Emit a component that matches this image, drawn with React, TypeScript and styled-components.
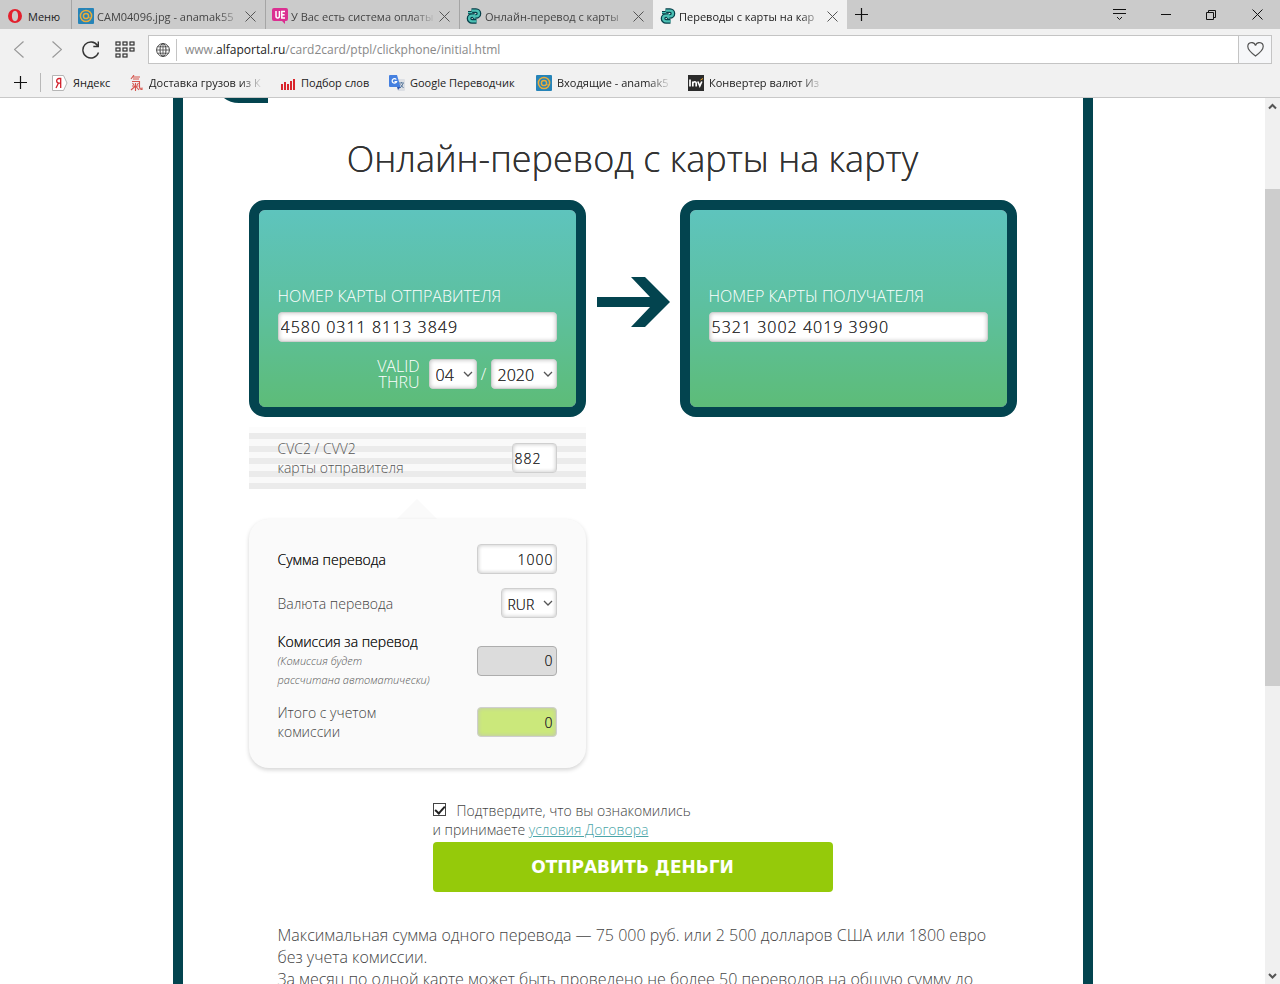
import React from 'react';
import styled, { createGlobalStyle } from 'styled-components';

const teal = '#03444f';

const GlobalStyle = createGlobalStyle`
  * { box-sizing: border-box; }
  body { margin: 0; background: #fff; font-family: "Open Sans", "Noto Sans", sans-serif; }
  button, input, select { font: inherit; color: inherit; margin: 0; }
  svg { display: block; flex: none; }
`;

/* ---------- browser window ---------- */

const Window = styled.div`
  display: flex;
  flex-direction: column;
  height: 100vh;
  overflow: hidden;
`;

const TabBar = styled.div`
  display: flex;
  height: 29px;
  background: #cbcbcb;
  font-size: 11px;
  color: #444;
`;

const PlainButton = styled.button<{ $w?: number }>`
  display: flex;
  align-items: center;
  justify-content: center;
  flex: none;
  width: ${p => (p.$w ? p.$w + 'px' : 'auto')};
  padding: 0;
  border: 0;
  background: none;
`;

const MenuButton = styled(PlainButton)`
  justify-content: flex-start;
  gap: 6px;
  width: 71px;
  padding: 3px 0 0 8px;
  color: #222;
`;

const Tab = styled.div<{ $active?: boolean }>`
  display: flex;
  align-items: center;
  gap: 3px;
  width: 194px;
  min-width: 0;
  padding: 3px 9px 0 6px;
  border-left: 1px solid ${p => (p.$active ? '#f1f1f1' : '#a5a5a5')};
  background: ${p => (p.$active ? '#f1f1f1' : 'transparent')};
  color: ${p => (p.$active ? '#222' : '#444')};
`;

const Fade = styled.span<{ $w?: number }>`
  flex: ${p => (p.$w ? 'none' : '1')};
  width: ${p => (p.$w ? p.$w + 'px' : 'auto')};
  min-width: 0;
  overflow: hidden;
  white-space: nowrap;
  mask-image: linear-gradient(to right, #000 calc(100% - 24px), transparent);
`;

const WindowButtons = styled.div`
  display: flex;
  margin-left: auto;
`;

const Toolbar = styled.div`
  display: flex;
  align-items: center;
  height: 41px;
  padding: 0 8px 0 0;
  background: #f1f1f1;
`;

const AddressBar = styled.div`
  display: flex;
  align-items: center;
  flex: 1;
  height: 29px;
  margin-left: 4px;
  border: 1px solid #c4c4c4;
  background: #fff;
`;

const Url = styled.a`
  flex: 1;
  padding-left: 8px;
  border-left: 1px solid #c4c4c4;
  font-size: 12px;
  line-height: 22px;
  color: #888;
  text-decoration: none;
`;

const Host = styled.span`
  color: #222;
`;

const HeartButton = styled(PlainButton)`
  align-self: stretch;
  border-left: 1px solid #c4c4c4;
  background: #f6f7f9;
`;

const Bookmarks = styled.nav`
  display: flex;
  align-items: center;
  height: 28px;
  padding-bottom: 2px;
  border-bottom: 1px solid #c8c8c8;
  background: #f1f1f1;
  font-size: 11px;
`;

const BarDivider = styled.span`
  width: 1px;
  height: 19px;
  margin-right: 11px;
  background: #b8b8b8;
`;

const Bookmark = styled.a`
  display: flex;
  align-items: center;
  gap: 5px;
  margin-right: 16px;
  color: #222;
  text-decoration: none;
`;

const BookmarkText = styled.span<{ $w: number }>`
  width: ${p => p.$w}px;
  white-space: nowrap;
`;

const Body = styled.div`
  display: flex;
  flex: 1;
  min-height: 0;
`;

const Scrollbar = styled.div`
  display: flex;
  flex-direction: column;
  width: 15px;
  background: #f0f0f0;
`;

const Space = styled.div<{ $grow: number; $thumb?: boolean }>`
  flex: ${p => p.$grow};
  background: ${p => (p.$thumb ? '#cdcdcd' : 'transparent')};
`;

/* ---------- transfer page ---------- */

const Page = styled.div`
  flex: 1;
  min-width: 0;
  overflow: hidden;
`;

const Frame = styled.main`
  max-width: 920px;
  margin: 0 auto;
  padding: 0 66px;
  border: solid ${teal};
  border-width: 0 10px;
  font-weight: 300;
  color: #444;
`;

const LogoEdge = styled.div`
  height: 5px;
  margin-left: -27px;
`;

const Title = styled.h1`
  margin: 31px 0 17px;
  font-size: 36px;
  line-height: 49px;
  font-weight: 300;
  text-align: center;
  white-space: nowrap;
  text-shadow: 0 0 0 #333;
  color: #333;
`;

const Cards = styled.div`
  display: flex;
  align-items: flex-start;
  justify-content: space-between;
`;

const Arrow = styled.svg`
  margin: 77px 0 0 1px;
`;

const Card = styled.section`
  width: 337px;
  height: 217px;
  padding: 76px 19px 0;
  border: 10px solid ${teal};
  border-radius: 16px;
  background: linear-gradient(#5ec4bd, #5dc0a0 48%, #5dbc78) padding-box;
  font-size: 16px;
  color: #fff;
`;

const CardLabel = styled.label`
  display: block;
  margin-bottom: 5px;
  line-height: 21px;
  white-space: nowrap;
`;

const Field = styled.input<{ $w: string; $tone?: 'grey' | 'green' | 'white'; $size?: number; $right?: boolean }>`
  display: block;
  flex: none;
  width: ${p => p.$w};
  height: 30px;
  padding: 0 2px;
  border: 1px solid ${p => (p.$tone === 'grey' ? '#adadad' : '#cfcfcf')};
  border-radius: 4px;
  outline: 0;
  background: ${p => (p.$tone === 'grey' ? '#dcdcdc' : p.$tone === 'green' ? '#cbe87b' : '#fff')};
  box-shadow: inset 0 0 4px ${p => (p.$tone === 'grey' ? 'transparent' : '#c0c0c0')};
  font-size: ${p => p.$size || 14}px;
  font-weight: 300;
  letter-spacing: 1px;
  text-align: ${p => (p.$right ? 'right' : 'left')};
  text-shadow: 0 0 0 #333;
  color: #333;
`;

const Valid = styled.div`
  display: flex;
  align-items: center;
  justify-content: flex-end;
  margin-top: 16px;
`;

const ValidText = styled.span`
  width: 43px;
  margin-right: 9px;
  line-height: 16px;
  text-align: right;
`;

const Slash = styled.span`
  width: 14px;
  text-align: center;
`;

const SelectWrap = styled.span<{ $w: number }>`
  position: relative;
  flex: none;
  width: ${p => p.$w}px;
  svg { position: absolute; right: 4px; top: 12px; pointer-events: none; }
`;

const SelectBox = styled.select<{ $size?: number }>`
  display: block;
  width: 100%;
  height: 30px;
  padding: 2px 0 0 6px;
  border: 1px solid #cfcfcf;
  border-radius: 4px;
  appearance: none;
  background: #fff;
  box-shadow: inset 0 0 4px #c0c0c0;
  font-size: ${p => p.$size || 14}px;
  font-weight: 300;
  text-shadow: 0 0 0 #333;
  color: #333;
`;

const Narrow = styled.div`
  width: 337px;
`;

const Cvc = styled.div`
  display: flex;
  align-items: center;
  justify-content: space-between;
  margin-top: 10px;
  padding: 12px 29px;
  background: repeating-linear-gradient(#ebebeb 0 6px, #f9f9f9 6px 13px, #ebebeb 13px 19px, #f9f9f9 19px 25px) 0 6px no-repeat #fcfcfc;
  font-size: 14px;
  line-height: 19px;
  color: #555;
`;

const Pointer = styled.div`
  width: 0;
  margin: 10px auto 0;
  border: solid transparent;
  border-width: 0 20px 20px;
  border-bottom-color: #fafafa;
`;

const Panel = styled.section`
  display: flex;
  flex-direction: column;
  gap: 14px;
  padding: 25px 29px 27px;
  border-radius: 20px;
  background: #fafafa;
  box-shadow: 0 2px 4px #d4d4d4;
  font-size: 14px;
  line-height: 19px;
`;

const Row = styled.div`
  display: flex;
  align-items: center;
  justify-content: space-between;
`;

const Strong = styled.span`
  display: block;
  text-shadow: 0 0 0 #222;
  color: #222;
`;

const Note = styled.em`
  display: block;
  font-size: 11px;
  color: #555;
`;

const Submit = styled.form`
  width: 400px;
  margin: 33px auto 0;
  font-size: 14px;
  line-height: 19px;
`;

const Check = styled.input`
  position: relative;
  width: 13px;
  height: 13px;
  margin: 0 11px 0 0;
  border: 1px solid #444;
  appearance: none;
  background: #fff;
  vertical-align: 0;
  &:checked::after {
    content: '';
    position: absolute;
    left: 3px;
    top: 0;
    width: 4px;
    height: 8px;
    border: solid #222;
    border-width: 0 2px 2px 0;
    transform: rotate(42deg);
  }
`;

const Terms = styled.a`
  color: #4aa5a8;
`;

const SendButton = styled.button`
  display: block;
  width: 100%;
  height: 50px;
  margin-top: 3px;
  border: 0;
  border-radius: 4px;
  background: #95ca0a;
  font-family: "DejaVu Sans", sans-serif;
  font-size: 17px;
  font-weight: 700;
  color: #fff;
`;

const Terse = styled.p`
  margin: 32px 0 0;
  padding: 0 29px;
  font-size: 16px;
  line-height: 22px;
  white-space: nowrap;
`;

/* ---------- icons ---------- */

const Cross = ({ color = '#555' }: { color?: string }) => (
  <svg width="11" height="11" viewBox="0 0 11 11" stroke={color} fill="none"><path d="M.5.5l10 10M10.5.5l-10 10" /></svg>
);
const Plus = () => (
  <svg width="13" height="13" viewBox="0 0 13 13" stroke="#111" strokeWidth="1.2"><path d="M6.5 0v13M0 6.5h13" /></svg>
);
const Opera = () => (
  <svg width="14" height="14" viewBox="0 0 14 14"><path fillRule="evenodd" fill="#e3202d" d="M7 0a7 7 0 100 14A7 7 0 007 0zm0 1.800c2 0 3.100 2.300 3.100 5.200S9 12.200 7 12.200 3.900 9.900 3.900 7 5 1.800 7 1.800z" /></svg>
);
const MailRu = () => (
  <svg width="16" height="16" viewBox="0 0 16 16" fill="none">
    <rect width="16" height="16" rx="1" fill="#2684b8" />
    <g stroke="#e9ac3a" strokeWidth="1.5"><circle cx="8" cy="8" r="2.600" /><circle cx="8" cy="8" r="5.600" /></g>
    <path stroke="#e9ac3a" d="M10.600 9q.8 1.800 2.400 1" />
  </svg>
);
const UeIcon = () => (
  <svg width="16" height="16" viewBox="0 0 16 16" fill="none">
    <path fill="#db2f91" d="M2 0h12a2 2 0 012 2v9a2 2 0 01-2 2h-1v3l-3-3H2a2 2 0 01-2-2V2a2 2 0 012-2z" />
    <path stroke="#fff" strokeWidth="1.500" d="M4 3v5q0 2 1.700 2t1.700-2V3M13 3.500H9.800v6.500H13M9.800 6.700h2.800" />
  </svg>
);
const transferLoops = 'M5.500 2.600H10a2.900 2.900 0 010 5.800H7.500M10.500 13.400H6a2.900 2.900 0 010-5.800H8';
const transferHeads = 'M9.300 6.200L7.200 8.400l2.100 2.200M2 4.600h4.200';
const Transfer = () => (
  <svg width="16" height="16" viewBox="0 0 16 16" fill="none" strokeLinejoin="round">
    <path stroke="#06404a" strokeWidth="4.800" d={transferLoops} />
    <path stroke="#06404a" strokeWidth="3.400" d={transferHeads} />
    <path stroke="#4cc0b4" strokeWidth="2.300" d={transferLoops} />
    <path stroke="#4cc0b4" strokeWidth="1.400" d={transferHeads} />
  </svg>
);
const Globe = () => (
  <svg width="14" height="14" viewBox="0 0 14 14" fill="none" stroke="#444"><circle cx="7" cy="7" r="6.400" /><ellipse cx="7" cy="7" rx="3" ry="6.400" /><path d="M7 .5v13M.5 7h13M1.500 3.800h11M1.500 10.200h11" strokeWidth=".8" /></svg>
);
const Speed = () => (
  <svg width="20" height="17" viewBox="0 0 20 17" fill="none" stroke="#333" strokeWidth="1.200">
    {[1, 8, 15].map(x => [1, 7, 13].map(y => (x === 15 && y === 13 ? null : <rect key={`${x}-${y}`} x={x} y={y} width="4" height="3" />)))}
  </svg>
);
const Yandex = () => (
  <svg width="16" height="16" viewBox="0 0 16 16" fill="none"><path fill="#fff" stroke="#b5b5b5" d="M.5.5h11L15 8l-3.500 7.500H.5z" /><path stroke="#d1202b" strokeWidth="1.300" d="M8.700 13V3.500H7a2.300 2.300 0 000 4.700h1.700M6.500 8L4 13" /></svg>
);
const Cargo = () => (
  <svg width="14" height="16" viewBox="0 0 14 16" fill="none" stroke="#d5544c" strokeWidth="1.100"><path d="M4 0L1 4M3 2h7M3 4h6M2 6.500h7.500v5q0 3 2.500 3v-2M2 11h6.500M5.500 8v8M2.500 8l1.500 2M8.500 8L7 10M5 11.500L1 15M6 11.500L9 15" /></svg>
);
const Bars = () => (
  <svg width="16" height="16" viewBox="0 0 16 16" stroke="#d9252c" strokeWidth="2"><path d="M2 9v6M5 7v8M8 9v6M11 6v9" /><path d="M14 4v11" /></svg>
);
const Translate = () => (
  <svg width="16" height="16" viewBox="0 0 16 16" fill="none">
    <path fill="#dcdfe4" d="M6 4h9a1 1 0 011 1v10a1 1 0 01-1 1H9z" />
    <path fill="#4580e0" d="M1 0h7l3.500 12H1a1 1 0 01-1-1V1a1 1 0 011-1z" />
    <path stroke="#fff" strokeWidth="1.200" d="M7.300 4.500a2.300 2.300 0 10.300 2.200H5.500" />
    <path stroke="#5b7a9d" d="M10 8h5M12.500 7v1M14 8.500q-1 3-3 4.500M11.500 9.500l3 3.500" />
    <path fill="#2f57b0" d="M8 12h3.500L9 15z" />
  </svg>
);
const Investing = () => (
  <svg width="16" height="16" viewBox="0 0 16 16" fill="none"><rect width="16" height="16" fill="#2b2b2b" /><path stroke="#fff" strokeWidth="1.700" d="M2 4.500v7M4.800 11.500V6.500M4.800 8q2.700-2.500 3.400 0v3.500M9.800 6.500l2 4.500 2-4.500" /><path stroke="#f0a92c" d="M12.500 5l2.500-1.500" /></svg>
);
const Chevron = () => (
  <svg width="10" height="6" viewBox="0 0 10 6" fill="none" stroke="#555" strokeWidth="1.300"><path d="M1 1l4 4 4-4" /></svg>
);
const ScrollArrow = ({ down }: { down?: boolean }) => (
  <svg width="15" height="17" viewBox="0 0 15 17" fill="none" stroke="#555" strokeWidth="2"><path d={down ? 'M4 7l3.500 3.500L11 7' : 'M4 10.500L7.500 7l3.500 3.500'} /></svg>
);

const tabs = [
  { icon: <MailRu />, text: 'CAM04096.jpg - anamak55' },
  { icon: <UeIcon />, text: 'У Вас есть система оплаты' },
  { icon: <Transfer />, text: 'Онлайн-перевод с карты' },
  { icon: <Transfer />, text: 'Переводы с карты на кар', active: true },
];

const bookmarks = [
  { icon: <Yandex />, text: 'Яндекс', w: 41 },
  { icon: <Cargo />, text: 'Доставка грузов из К', w: 115, fade: true },
  { icon: <Bars />, text: 'Подбор слов', w: 72 },
  { icon: <Translate />, text: 'Google Переводчик', w: 110 },
  { icon: <MailRu />, text: 'Входящие - anamak5', w: 115, fade: true },
  { icon: <Investing />, text: 'Конвертер валют Из', w: 115, fade: true },
];

export default function App() {
  return (
    <Window>
      <GlobalStyle />
      <TabBar>
        <MenuButton><Opera />Меню</MenuButton>
        {tabs.map(t => (
          <Tab key={t.text} $active={t.active}>
            {t.icon}
            <Fade>{t.text}</Fade>
            <PlainButton aria-label="Закрыть вкладку"><Cross /></PlainButton>
          </Tab>
        ))}
        <PlainButton $w={29} aria-label="Новая вкладка"><Plus /></PlainButton>
        <WindowButtons>
          <PlainButton $w={50} aria-label="Вкладки">
            <svg width="13" height="12" viewBox="0 0 13 12" fill="none" stroke="#111"><path d="M0 .5h13M0 4.500h13M4 8l2.500 2.500L9 8" /></svg>
          </PlainButton>
          <PlainButton $w={43} aria-label="Свернуть"><svg width="10" height="2" viewBox="0 0 10 2"><path d="M0 .5h10" stroke="#111" /></svg></PlainButton>
          <PlainButton $w={47} aria-label="Развернуть">
            <svg width="10" height="10" viewBox="0 0 10 10" fill="none" stroke="#111"><path d="M.5 2.500h7v7h-7zM2.500 2.500v-2h7v7h-2" /></svg>
          </PlainButton>
          <PlainButton $w={46} aria-label="Закрыть"><Cross color="#111" /></PlainButton>
        </WindowButtons>
      </TabBar>
      <Toolbar>
        <PlainButton $w={38} aria-label="Назад"><svg width="10" height="17" viewBox="0 0 10 17" fill="none" stroke="#999" strokeWidth="1.200"><path d="M9.500.5l-9 8 9 8" /></svg></PlainButton>
        <PlainButton $w={37} aria-label="Вперёд"><svg width="10" height="17" viewBox="0 0 10 17" fill="none" stroke="#999" strokeWidth="1.200"><path d="M.5.5l9 8-9 8" /></svg></PlainButton>
        <PlainButton $w={31} aria-label="Обновить"><svg width="18" height="18" viewBox="0 0 18 18" fill="none" stroke="#333" strokeWidth="1.400"><path d="M16.500 11.500A8 8 0 1115.500 4.500M16.300.5v5h-5" /></svg></PlainButton>
        <PlainButton $w={38} aria-label="Экспресс-панель"><Speed /></PlainButton>
        <AddressBar>
          <PlainButton $w={27} aria-label="Сведения о сайте"><Globe /></PlainButton>
          <Url href="#">www.<Host>alfaportal.ru</Host>/card2card/ptpl/clickphone/initial.html</Url>
          <HeartButton $w={33} aria-label="В закладки">
            <svg width="17" height="15" viewBox="0 0 17 15" fill="none" stroke="#555" strokeWidth="1.200"><path d="M8.500 14C5 11.500.8 8.500.8 4.600a3.900 3.900 0 017.700-1 3.900 3.900 0 017.700 1c0 3.900-4.200 6.900-7.700 9.400z" /></svg>
          </HeartButton>
        </AddressBar>
      </Toolbar>
      <Bookmarks>
        <PlainButton $w={40} aria-label="Добавить закладку"><Plus /></PlainButton>
        <BarDivider />
        {bookmarks.map(b => (
          <Bookmark key={b.text} href="#">
            {b.icon}
            {b.fade ? <Fade $w={b.w}>{b.text}</Fade> : <BookmarkText $w={b.w}>{b.text}</BookmarkText>}
          </Bookmark>
        ))}
      </Bookmarks>
      <Body>
        <Page>
          <Frame>
            <LogoEdge><svg width="46" height="5" viewBox="0 0 46 5"><path d="M2 0h44v5H17Q8 5 2 0z" fill={teal} /></svg></LogoEdge>
            <Title>Онлайн-перевод с карты на карту</Title>
            <Cards>
              <Card>
                <CardLabel htmlFor="from">НОМЕР КАРТЫ ОТПРАВИТЕЛЯ</CardLabel>
                <Field id="from" $w="100%" $size={16} defaultValue="4580 0311 8113 3849" />
                <Valid>
                  <ValidText>VALID THRU</ValidText>
                  <SelectWrap $w={48}><SelectBox $size={16} aria-label="Месяц"><option>04</option></SelectBox><Chevron /></SelectWrap>
                  <Slash>/</Slash>
                  <SelectWrap $w={66}><SelectBox $size={16} aria-label="Год"><option>2020</option></SelectBox><Chevron /></SelectWrap>
                </Valid>
              </Card>
              <Arrow width="73" height="50" viewBox="0 0 73 50"><path d="M0 20h53L34 0h14l25 25-25 25H34l19-20H0z" fill={teal} /></Arrow>
              <Card>
                <CardLabel htmlFor="to">НОМЕР КАРТЫ ПОЛУЧАТЕЛЯ</CardLabel>
                <Field id="to" $w="100%" $size={16} defaultValue="5321 3002 4019 3990" />
              </Card>
            </Cards>
            <Narrow>
              <Cvc>
                <label htmlFor="cvc">CVC2 / CVV2<br />карты отправителя</label>
                <Field id="cvc" $w="45px" defaultValue="882" />
              </Cvc>
              <Pointer />
              <Panel>
                <Row>
                  <label htmlFor="sum"><Strong>Сумма перевода</Strong></label>
                  <Field id="sum" $w="80px" $right defaultValue="1000" />
                </Row>
                <Row>
                  <label htmlFor="currency">Валюта перевода</label>
                  <SelectWrap $w={56}><SelectBox id="currency"><option>RUR</option></SelectBox><Chevron /></SelectWrap>
                </Row>
                <Row>
                  <label htmlFor="fee"><Strong>Комиссия за перевод</Strong><Note>(Комиссия будет<br />рассчитана автоматически)</Note></label>
                  <Field id="fee" $w="80px" $tone="grey" $right readOnly defaultValue="0" />
                </Row>
                <Row>
                  <label htmlFor="total">Итого с учетом<br />комиссии</label>
                  <Field id="total" $w="80px" $tone="green" $right readOnly defaultValue="0" />
                </Row>
              </Panel>
            </Narrow>
            <Submit onSubmit={e => e.preventDefault()}>
              <Check id="agree" type="checkbox" defaultChecked />
              <label htmlFor="agree">Подтвердите, что вы ознакомились<br />и принимаете </label>
              <Terms href="#">условия Договора</Terms>
              <SendButton>ОТПРАВИТЬ ДЕНЬГИ</SendButton>
            </Submit>
            <Terse>
              Максимальная сумма одного перевода — 75 000 руб. или 2 500 долларов США или 1800 евро<br />
              без учета комиссии.<br />
              За месяц по одной карте может быть проведено не более 50 переводов на общую сумму до
            </Terse>
          </Frame>
        </Page>
        <Scrollbar>
          <ScrollArrow />
          <Space $grow={74} />
          <Space $grow={497} $thumb />
          <Space $grow={281} />
          <ScrollArrow down />
        </Scrollbar>
      </Body>
    </Window>
  );
}
